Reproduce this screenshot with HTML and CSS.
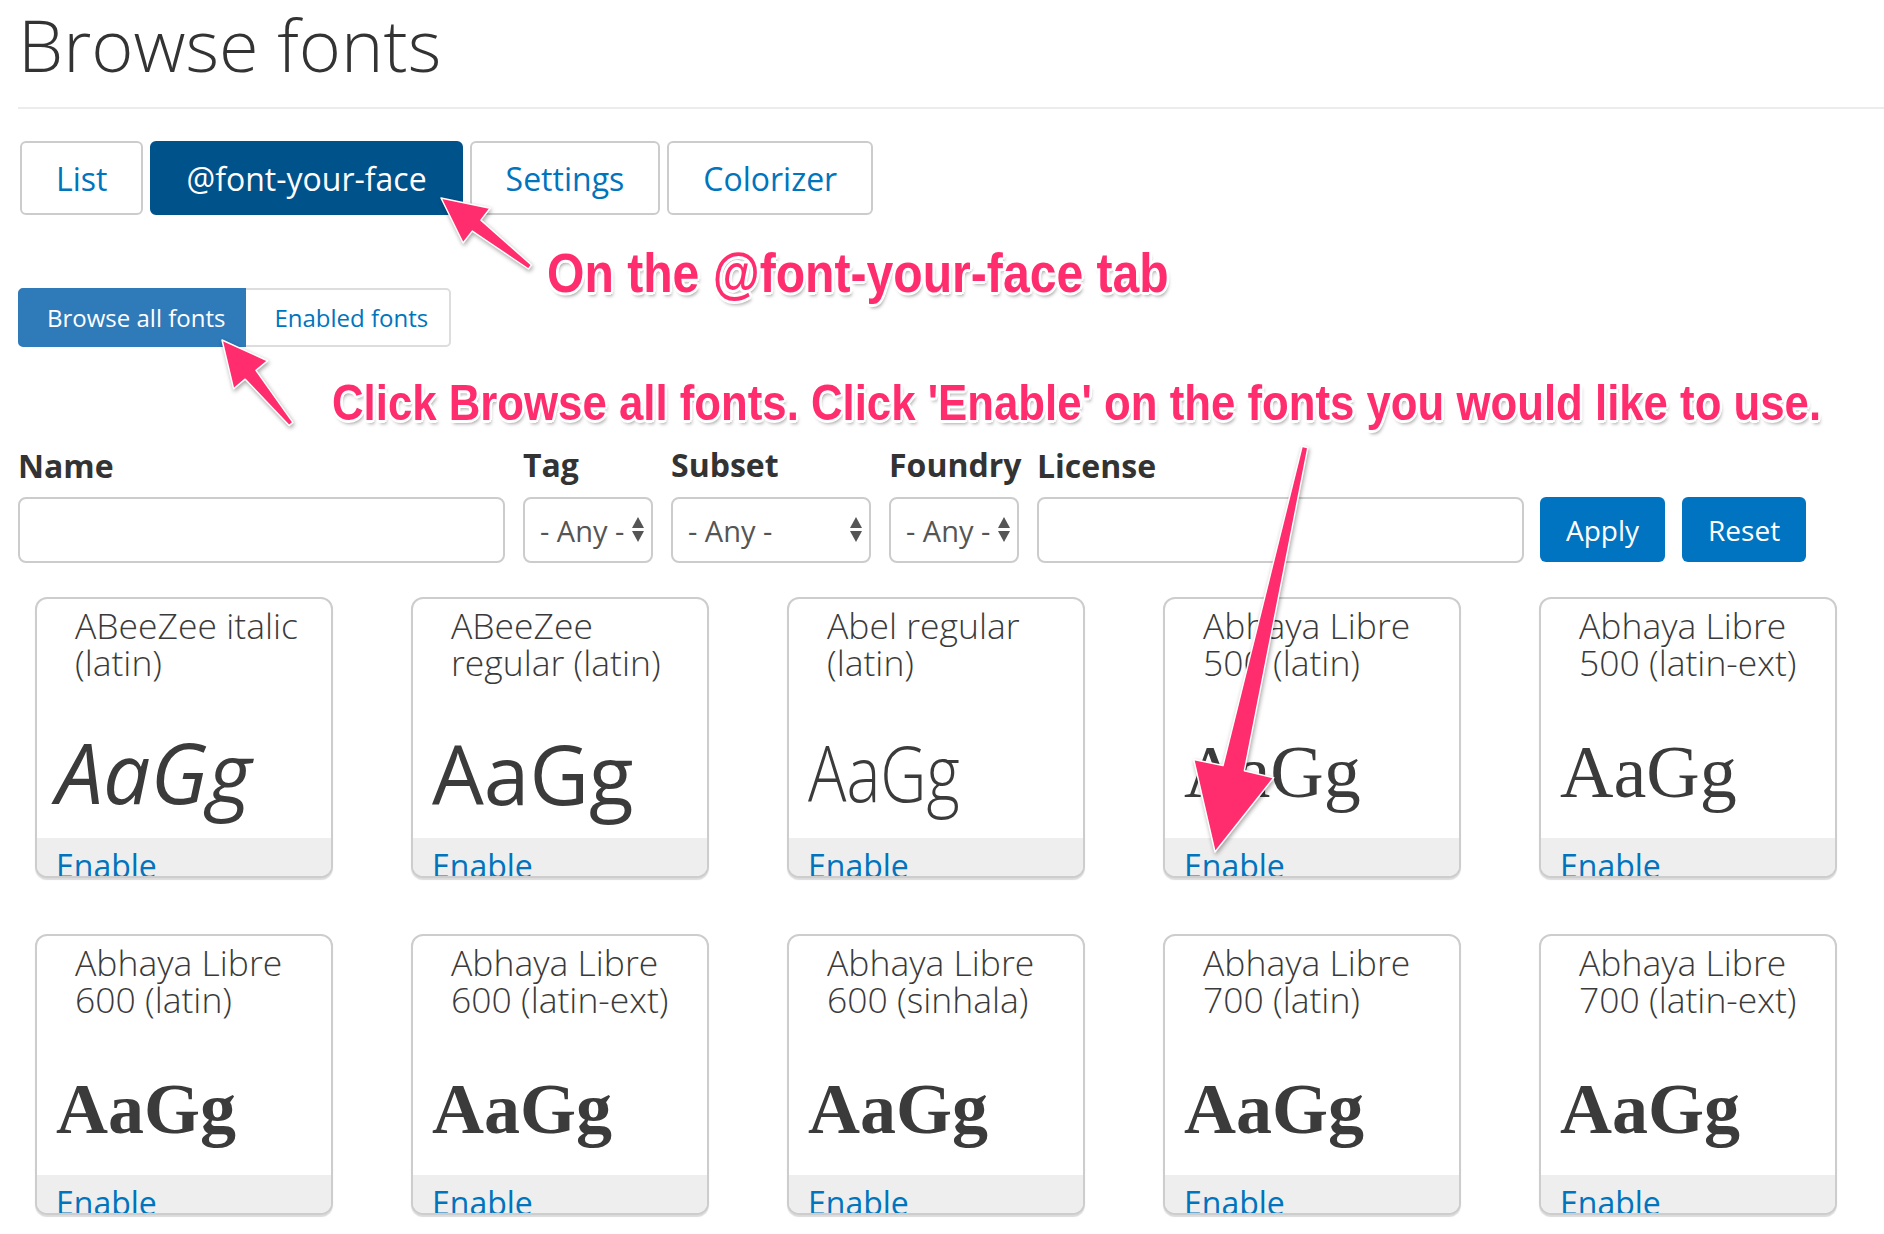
FILE: index.html
```html
<!DOCTYPE html>
<html lang="en">
<head>
<meta charset="utf-8">
<title>Browse fonts</title>
<link rel="stylesheet" href="styles.css">
</head>
<body>
<div class="page">
  <h1 class="title">Browse fonts</h1>
  <hr class="rule">

  <nav class="tabs">
    <a class="tab">List</a>
    <a class="tab tab-active">@font-your-face</a>
    <a class="tab">Settings</a>
    <a class="tab">Colorizer</a>
  </nav>

  <div class="subtabs">
    <a class="subtab subtab-active">Browse all fonts</a>
    <a class="subtab">Enabled fonts</a>
  </div>

  <form class="filters">
    <div class="field field-wide">
      <label class="label">Name</label>
      <div class="input"></div>
    </div>
    <div class="field field-small">
      <label class="label">Tag</label>
      <div class="select"><span>- Any -</span><svg class="updown" viewBox="0 0 12 26" width="12" height="26"><polygon points="6,0 12,11 0,11"/><polygon points="0,14 12,14 6,25"/></svg></div>
    </div>
    <div class="field field-mid">
      <label class="label">Subset</label>
      <div class="select"><span>- Any -</span><svg class="updown" viewBox="0 0 12 26" width="12" height="26"><polygon points="6,0 12,11 0,11"/><polygon points="0,14 12,14 6,25"/></svg></div>
    </div>
    <div class="field field-small">
      <label class="label">Foundry</label>
      <div class="select"><span>- Any -</span><svg class="updown" viewBox="0 0 12 26" width="12" height="26"><polygon points="6,0 12,11 0,11"/><polygon points="0,14 12,14 6,25"/></svg></div>
    </div>
    <div class="field field-wide">
      <label class="label">License</label>
      <div class="input"></div>
    </div>
    <div class="actions">
      <button type="button" class="btn">Apply</button>
      <button type="button" class="btn">Reset</button>
    </div>
  </form>

  <div class="grid">
    <div class="card">
      <div class="card-title">ABeeZee italic<br>(latin)</div>
      <div class="sample s-abeezee-italic">AaGg</div>
      <div class="card-foot">Enable</div>
    </div>
    <div class="card">
      <div class="card-title">ABeeZee<br>regular (latin)</div>
      <div class="sample s-abeezee">AaGg</div>
      <div class="card-foot">Enable</div>
    </div>
    <div class="card">
      <div class="card-title">Abel regular<br>(latin)</div>
      <div class="sample s-abel"><span class="abel-glyphs">AaGg</span></div>
      <div class="card-foot">Enable</div>
    </div>
    <div class="card">
      <div class="card-title">Abhaya Libre<br>500 (latin)</div>
      <div class="sample s-abhaya">AaGg</div>
      <div class="card-foot">Enable</div>
    </div>
    <div class="card">
      <div class="card-title">Abhaya Libre<br>500 (latin-ext)</div>
      <div class="sample s-abhaya">AaGg</div>
      <div class="card-foot">Enable</div>
    </div>

    <div class="card">
      <div class="card-title">Abhaya Libre<br>600 (latin)</div>
      <div class="sample s-abhaya s-bold">AaGg</div>
      <div class="card-foot">Enable</div>
    </div>
    <div class="card">
      <div class="card-title">Abhaya Libre<br>600 (latin-ext)</div>
      <div class="sample s-abhaya s-bold">AaGg</div>
      <div class="card-foot">Enable</div>
    </div>
    <div class="card">
      <div class="card-title">Abhaya Libre<br>600 (sinhala)</div>
      <div class="sample s-abhaya s-bold">AaGg</div>
      <div class="card-foot">Enable</div>
    </div>
    <div class="card">
      <div class="card-title">Abhaya Libre<br>700 (latin)</div>
      <div class="sample s-abhaya s-bold">AaGg</div>
      <div class="card-foot">Enable</div>
    </div>
    <div class="card">
      <div class="card-title">Abhaya Libre<br>700 (latin-ext)</div>
      <div class="sample s-abhaya s-bold">AaGg</div>
      <div class="card-foot">Enable</div>
    </div>
  </div>
</div>

<div class="overlay">
  <div class="note note-1">On the @font-your-face tab</div>
  <div class="note note-2">Click Browse all fonts. Click 'Enable' on the fonts you would like to use.</div>
  <svg class="arrows" viewBox="0 0 1884 1234" width="1884" height="1234">
    <polygon class="arrow" points="531.5,265.0 480.9,220.1 490.1,208.2 441,198 463.1,243.0 472.3,231.1 528.5,269.0"/>
    <polygon class="arrow" points="292.9,422.4 256.0,370.4 267.6,360.8 222,340 233.6,388.8 245.2,379.2 289.1,425.6"/>
    <polygon class="arrow" points="1302.1,446.3 1223.0,765.5 1193.7,759.5 1215,852 1273.7,777.7 1244.4,770.7 1307.9,447.7"/>
  </svg>
</div>
</body>
</html>
```

FILE: styles.css
```css
* {
  box-sizing: border-box;
}

body {
  margin: 0;
  position: relative;
  width: 1884px;
  height: 1234px;
  overflow: hidden;
  background: #ffffff;
  color: #333333;
  font-family: "Open Sans", "DejaVu Sans", sans-serif;
}

.page {
  padding: 4px 0 0 18px;
}

.title {
  margin: 0;
  font-size: 72px;
  font-weight: 300;
  line-height: 80px;
  color: #333333;
}

.rule {
  margin: 23px 0 0 0;
  border: 0;
  height: 2px;
  background: #ececec;
}

/* primary tabs */
.tabs {
  margin-top: 32px;
  margin-left: 2px;
  display: flex;
  gap: 7px;
}

.tab {
  height: 74px;
  display: flex;
  align-items: center;
  padding: 0 34px;
  border: 2px solid #cccccc;
  border-radius: 6px;
  font-size: 32px;
  color: #0074bd;
  background: #ffffff;
}

.tab-active {
  background: #00528b;
  border-color: #00528b;
  color: #ffffff;
}

/* secondary tabs */
.subtabs {
  margin-top: 73px;
  display: flex;
  width: fit-content;
}

.subtab {
  height: 59px;
  display: flex;
  align-items: center;
  font-size: 24px;
  color: #0074bd;
  border: 2px solid #dddddd;
  border-left: 0;
  border-radius: 0 5px 5px 0;
  padding: 0 21px 0 28px;
  background: #ffffff;
}

.subtab-active {
  background: #2f7ab9;
  border: 2px solid #2f7ab9;
  border-radius: 5px 0 0 5px;
  color: #ffffff;
  padding: 0 19px 0 27px;
}

/* filters */
.filters {
  margin-top: 99px;
  display: flex;
  align-items: flex-end;
  gap: 18px;
}

.field {
  display: flex;
  flex-direction: column;
}

.field-wide { width: 487px; }
.field-small { width: 130px; }
.field-mid { width: 200px; }

.label {
  font-size: 32px;
  font-weight: 700;
  line-height: 37px;
  margin-bottom: 13px;
  white-space: nowrap;
  color: #333333;
}

.input {
  height: 66px;
  border: 2px solid #cccccc;
  border-radius: 8px;
  background: #ffffff;
}

.select {
  height: 66px;
  margin-top: 1px;
  border: 2px solid #cccccc;
  border-radius: 8px;
  background: #ffffff;
  display: flex;
  align-items: center;
  justify-content: space-between;
  padding: 0 7px 0 15px;
  font-size: 29px;
  color: #555555;
  white-space: nowrap;
}

.updown {
  fill: #555555;
  flex: none;
}

.actions {
  display: flex;
  gap: 17px;
  margin-left: -2px;
}

.btn {
  height: 65px;
  margin-bottom: 1px;
  padding: 0 26px;
  border: 0;
  border-radius: 6px;
  background: #0073c1;
  color: #ffffff;
  font-family: "Open Sans", "DejaVu Sans", sans-serif;
  font-size: 28px;
}

/* font cards */
.grid {
  margin-top: 34px;
  margin-left: 17px;
  display: grid;
  grid-template-columns: repeat(5, 298px);
  column-gap: 78px;
  row-gap: 56px;
}

.card {
  height: 281px;
  border: 2px solid #cdcdcd;
  border-radius: 12px;
  overflow: hidden;
  display: flex;
  flex-direction: column;
  background: #ffffff;
  box-shadow: 0 2px 1px rgba(0, 0, 0, 0.14);
}

.card-title {
  padding: 8px 6px 0 38px;
  font-size: 35.5px;
  font-weight: 300;
  line-height: 37px;
  color: #3a3a3a;
  white-space: nowrap;
}

.sample {
  padding-left: 19px;
  color: #3b3b3b;
  white-space: nowrap;
}

.s-abeezee-italic {
  margin-top: 51px;
  font-size: 84px;
  line-height: 80px;
  font-style: italic;
}

.s-abeezee {
  margin-top: 52px;
  font-size: 82px;
  line-height: 80px;
  font-weight: 500;
}

.s-abel {
  margin-top: 53px;
  font-size: 78px;
  line-height: 77px;
  font-weight: 300;
}

.abel-glyphs {
  display: inline-block;
  transform: scaleX(0.82);
  transform-origin: left center;
}

.s-abhaya {
  margin-top: 55px;
  font-family: "Liberation Serif", "DejaVu Serif", serif;
  font-size: 74px;
  line-height: 72px;
}

.s-bold {
  font-weight: 700;
  font-size: 72px;
}

.card-foot {
  margin-top: auto;
  height: 38px;
  flex: none;
  background: #eeeeee;
  padding: 12px 0 0 19px;
  font-size: 32px;
  line-height: 32px;
  color: #0074bd;
}

/* annotation overlay */
.overlay {
  position: absolute;
  left: 0;
  top: 0;
  width: 1884px;
  height: 1234px;
  pointer-events: none;
}

.note {
  position: absolute;
  font-family: "Liberation Sans", Arial, sans-serif;
  font-weight: 700;
  color: #ff2d6e;
  white-space: nowrap;
  transform: scaleX(0.875);
  transform-origin: left top;
  text-shadow:
    3px 0 0 #fff, -3px 0 0 #fff, 0 3px 0 #fff, 0 -3px 0 #fff,
    2px 2px 0 #fff, -2px 2px 0 #fff, 2px -2px 0 #fff, -2px -2px 0 #fff,
    2px 4px 4px rgba(0, 0, 0, 0.35);
}

.note-1 {
  left: 547px;
  top: 246px;
  font-size: 55px;
  line-height: 55px;
}

.note-2 {
  left: 332px;
  top: 378px;
  font-size: 50px;
  line-height: 50px;
}

.arrows {
  position: absolute;
  left: 0;
  top: 0;
}

.arrow {
  fill: #ff2d6e;
  stroke: #ffffff;
  stroke-width: 1.5;
  stroke-linejoin: round;
  filter: drop-shadow(1px 2px 2px rgba(0, 0, 0, 0.35));
}
```
